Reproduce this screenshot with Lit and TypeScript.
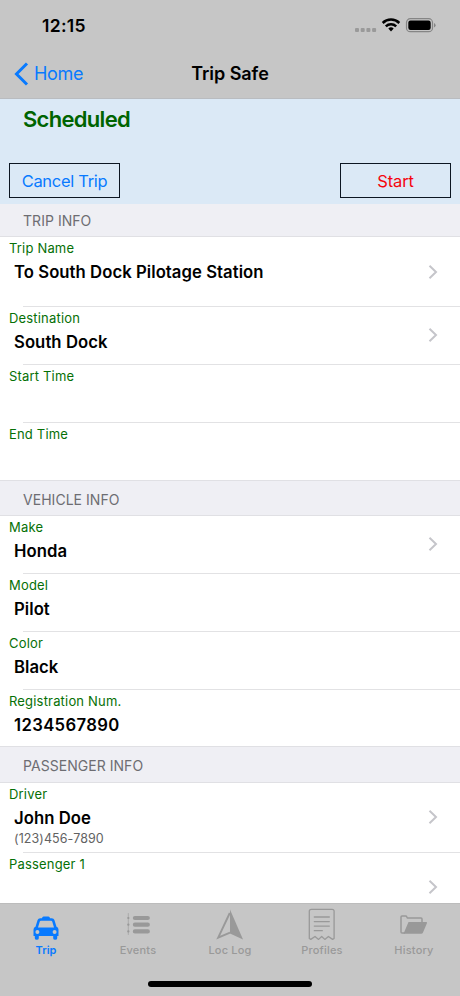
import { LitElement, html, css, svg, nothing } from "lit";
import { customElement } from "lit/decorators.js";

interface Row {
  label: string;
  value?: string;
  detail?: string;
  height: number;
  chevron?: boolean;
}
interface Section {
  title: string;
  height: number;
  rows: Row[];
}

const sections: Section[] = [
  {
    title: "TRIP INFO",
    height: 33.4,
    rows: [
      { label: "Trip Name", value: "To South Dock Pilotage Station", height: 69.6, chevron: true },
      { label: "Destination", value: "South Dock", height: 58, chevron: true },
      { label: "Start Time", height: 58 },
      { label: "End Time", height: 57 },
    ],
  },
  {
    title: "VEHICLE INFO",
    height: 36,
    rows: [
      { label: "Make", value: "Honda", height: 58, chevron: true },
      { label: "Model", value: "Pilot", height: 58 },
      { label: "Color", value: "Black", height: 57.6 },
      { label: "Registration Num.", value: "1234567890", height: 56.4 },
    ],
  },
  {
    title: "PASSENGER INFO",
    height: 37,
    rows: [
      { label: "Driver", value: "John Doe", detail: "(123)456-7890", height: 70, chevron: true },
      { label: "Passenger 1", height: 70, chevron: true },
    ],
  },
];

const tabs = [
  {
    name: "Trip",
    active: true,
    icon: svg`<path fill="currentColor" fill-rule="evenodd" d="M14 14.300q.2-1.800 1.600-1.800h4.800q1.400 0 1.600 1.800h1.800q2 0 2.600 1.700l2.100 6.800q2 .7 2 2.900v6.300h-1.300v2.200q0 1.600-2 1.600t-2-1.600V32H10.800v2.200q0 1.600-2 1.600t-2-1.600V32H5.500v-6.300q0-2.200 2-2.900l2.100-6.800q.6-1.700 2.600-1.700zM12.900 16.800q-.9 0-1.200.9l-1.700 5.800h16l-1.700-5.800q-.3-.9-1.200-.9zM9.400 25.900a2 2 0 1 0 0 4a2 2 0 0 0 0-4zM26.600 25.900a2 2 0 1 0 0 4a2 2 0 0 0 0-4z"/>`,
  },
  {
    name: "Events",
    icon: svg`<g stroke="currentColor" stroke-linecap="round" fill="none"><path stroke-width="4.200" d="M14.900 14H27.800M14.900 20.700H27.800M14.900 27.400H27.800"/><path stroke-width="2.200" d="M8.300 14h.1M8.300 20.700h.1M8.300 27.400h.1"/><path stroke-width=".6" d="M8.300 9.500v21"/></g>`,
  },
  {
    name: "Loc Log",
    icon: svg`<path fill="none" stroke="currentColor" stroke-width="1.900" stroke-linejoin="miter" d="M17.800 9L6.200 33.700l11.800-5"/><path fill="currentColor" d="M18 5.500l13 30L18 29.500z"/>`,
  },
  {
    name: "Profiles",
    icon: svg`<g fill="none" stroke="currentColor" stroke-width="1.300" stroke-linejoin="round" stroke-linecap="round"><path d="M5.300 34.500V7.300q0-2 2-2h20.800q2 0 2 2v27.200l-1.500.9-4.200-2.900-3.600 2.900-3.100-2.900-3.100 2.900-3.600-2.900-4.200 2.900z"/><path d="M10.300 13h15M10.300 17.600h15M10.300 22.100h15M10.300 26.700h8"/></g>`,
  },
  {
    name: "History",
    icon: svg`<path fill="none" stroke="currentColor" stroke-width="1.500" stroke-linejoin="round" d="M9 29H6q-1 0-1-1V13q0-1 1-1h3.700q.8 0 1.100.8l.5 1.200H25q1 0 1 1v3"/><path fill="currentColor" d="M12.500 18h17.700q1.200 0 .7 1.200L27 28.500q-.5 1.200-1.800 1.200H7.500z"/>`,
  },
];

@customElement("app-root")
export class AppRoot extends LitElement {
  static styles = css`
    :host {
      display: flex;
      flex-direction: column;
      box-sizing: border-box;
      width: 460px;
      height: 996px;
      overflow: hidden;
      background: #fff;
      color: #000;
      font-family: Inter, "Liberation Sans", sans-serif;
    }
    * { box-sizing: border-box; }
    svg { display: block; flex: none; }
    .top { flex: none; height: 99px; background: #c6c6c6; border-bottom: 1px solid #b9bcc0; }
    .status {
      height: 50px;
      padding: 1px 24px 0 42px;
      display: flex;
      align-items: center;
      justify-content: space-between;
    }
    .status svg { margin-top: -2px; }
    .time { font-size: 17.500px; font-weight: 600; line-height: 20px; letter-spacing: 0.3px; }
    .nav {
      height: 48px;
      padding: 0 14px;
      display: grid;
      grid-template-columns: 1fr auto 1fr;
      align-items: center;
    }
    .back { display: flex; align-items: center; gap: 5px; color: #087aff; font-size: 18px; line-height: 22px; letter-spacing: -0.3px; }
    .title { font-size: 18px; line-height: 22px; font-weight: 600; letter-spacing: -0.05px; }
    .summary {
      flex: none;
      height: 105px;
      background: #dbe9f6;
      padding: 7px 9px 6px;
      display: flex;
      flex-direction: column;
      justify-content: space-between;
    }
    .state { padding-left: 14px; font-size: 22px; line-height: 26px; font-weight: 600; color: #006400; letter-spacing: -0.7px; }
    .actions { display: flex; justify-content: space-between; }
    .btn {
      width: 111px;
      height: 35px;
      border: 1px solid #0c1622;
      padding: 2px 0 0;
      background: none;
      font: 400 16.500px/31px Inter, sans-serif;
      letter-spacing: -0.3px;
      color: #087aff;
    }
    .btn.start { color: #f5050f; letter-spacing: -0.1px; }
    .list { flex: 1; min-height: 0; overflow: hidden; }
    .heading {
      display: flex;
      align-items: center;
      padding: 0 0 0 23px;
      background: #efeff4;
      border-bottom: 1px solid #e0e0e4;
      color: #6d6d72;
      font-size: 14px;
      line-height: 17px;
      letter-spacing: 0.04px;
    }
    .heading.later { padding-top: 3px; border-top: 1px solid #e0e0e4; }
    .row { display: grid; grid-template-columns: 1fr auto; align-items: center; padding-right: 22px; background: linear-gradient(#e2e2e4, #e2e2e4) 23px 100% / 100% 1px no-repeat; }
    .row.last { background: none; }
    .row svg { margin-top: -1px; }
    .text { align-self: start; padding: 3px 0 0 9px; }
    .label { font-size: 13px; line-height: 16px; color: #067006; letter-spacing: 0.18px; }
    .value { padding-left: 5px; margin-top: 6px; font-size: 16.700px; line-height: 21px; font-weight: 600; letter-spacing: 0.05px; }
    .value.numeric { letter-spacing: 0.36px; }
    .detail { padding-left: 5px; margin-top: 2px; font-size: 12.500px; line-height: 15px; color: #626262; letter-spacing: 0.08px; }
    .tabs { flex: none; height: 93px; background: #c6c6c6; display: flex; flex-direction: column; border-top: 1px solid #bcbcbc; }
    .items { display: grid; grid-template-columns: repeat(5, 92px); height: 76px; }
    .tab { display: flex; flex-direction: column; align-items: center; color: #999; font-size: 11px; line-height: 14px; font-weight: 500; letter-spacing: 0.2px; }
    .tab span { margin-top: -1px; }
    .tab.active { color: #087aff; font-weight: 600; letter-spacing: 0; }
    .home { align-self: center; width: 164px; height: 6px; border-radius: 3px; background: #000; margin: 1px 0 0; }
  `;

  private row(r: Row, last: boolean) {
    const numeric = /^\d+$/.test(r.value ?? "");
    return html`<div class="row ${last ? "last" : ""}" style="height:${r.height}px">
      <div class="text">
        <div class="label">${r.label}</div>
        ${r.value ? html`<div class="value ${numeric ? "numeric" : ""}">${r.value}</div>` : nothing}
        ${r.detail ? html`<div class="detail">${r.detail}</div>` : nothing}
      </div>
      ${r.chevron
        ? html`<svg width="10" height="16" viewBox="0 0 10 16"><path d="M1.500 1.800L8 8l-6.500 6.200" fill="none" stroke="#c5c5ca" stroke-width="2"/></svg>`
        : nothing}
    </div>`;
  }

  render() {
    return html`
      <header class="top">
        <div class="status">
          <span class="time">12:15</span>
          <svg width="81" height="16" viewBox="0 0 81 16">
            <g fill="#9a9a9a"><rect x="0" y="11" width="4" height="4" rx="1"/><rect x="5.700" y="11" width="4" height="4" rx="1"/><rect x="11.400" y="11" width="4" height="4" rx="1"/><rect x="17.100" y="11" width="4" height="4" rx="1"/></g>
            <g fill="none" stroke="#000" stroke-width="2.500"><path d="M27.700 6a11.800 11.800 0 0 1 16.600 0"/><path d="M30.800 9.300a7.500 7.500 0 0 1 10.400 0"/></g>
            <path d="M33.300 11.600a4 4 0 0 1 5.400 0L36 14.600z"/>
            <rect x="51.500" y="1.700" width="26" height="13" rx="3.800" fill="none" stroke="#858585" stroke-width="1.200"/>
            <rect x="53.300" y="3.500" width="22.400" height="9.400" rx="2.200"/>
            <path d="M79 5.900q1.600 1 1.600 2.300T79 10.500z" fill="#858585"/>
          </svg>
        </div>
        <div class="nav">
          <div class="back">
            <svg width="15" height="24" viewBox="0 0 15 24"><path d="M13 1.500L2.500 12 13 22.500" fill="none" stroke="currentColor" stroke-width="3"/></svg>
            <span>Home</span>
          </div>
          <div class="title">Trip Safe</div>
        </div>
      </header>
      <section class="summary">
        <div class="state">Scheduled</div>
        <div class="actions">
          <button class="btn">Cancel Trip</button>
          <button class="btn start">Start</button>
        </div>
      </section>
      <main class="list">
        ${sections.map(
          (s, n) => html`<div class="heading ${n ? "later" : ""}" style="height:${s.height}px">${s.title}</div>
            ${s.rows.map((r, i) => this.row(r, i === s.rows.length - 1))}`
        )}
      </main>
      <footer class="tabs">
        <nav class="items">
          ${tabs.map(
            (t) => html`<div class="tab ${t.active ? "active" : ""}">
              <svg width="36" height="40" viewBox="0 0 36 40">${t.icon}</svg>
              <span>${t.name}</span>
            </div>`
          )}
        </nav>
        <div class="home"></div>
      </footer>
    `;
  }
}
